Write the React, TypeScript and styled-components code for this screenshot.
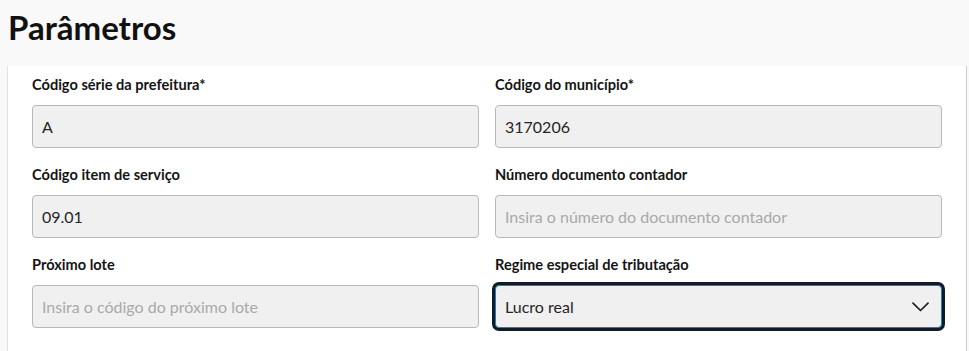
import React from "react";
import styled, { createGlobalStyle } from "styled-components";

const Global = createGlobalStyle`
  html, body { margin: 0; padding: 0; background: #f9f9f9; }
  body { font-family: Lato, "Noto Sans", sans-serif; color: #1a1a1a; }
  * { box-sizing: border-box; }
`;

const Page = styled.div`
  width: 969px;
  height: 351px;
  overflow: hidden;
  background: #f9f9f9;
  display: flex;
  flex-direction: column;
`;

const Header = styled.header`
  height: 66px;
  padding: 7px 0 0 8px;
  flex: none;
`;

const Title = styled.h1`
  margin: 0;
  font-size: 33px;
  line-height: 40px;
  font-weight: 700;
  color: #111;
`;

const Panel = styled.section`
  margin: 0 2px 0 7px;
  flex: 1;
  background: #fff;
  border-left: 1px solid #e2e2e2;
  border-right: 1px solid #cfcfcf;
  padding: 9px 24px 0 24px;
  display: grid;
  grid-template-columns: 447px 447px;
  column-gap: 16px;
  row-gap: 0;
  align-content: start;
`;

const Field = styled.div`
  display: flex;
  flex-direction: column;
  height: 90px;
`;

const Label = styled.label`
  font-size: 14.6px;
  font-weight: 700;
  color: #141414;
  line-height: 20px;
  height: 20px;
  margin-bottom: 10px;
`;

const Input = styled.div<{ $placeholder?: boolean }>`
  height: 43px;
  border: 1px solid #b8b8b8;
  border-radius: 4px;
  background: #f0f0f0;
  padding: 0 10px 0 9px;
  display: flex;
  align-items: center;
  font-size: 16px;
  color: ${(p) => (p.$placeholder ? "#a9a9a9" : "#262626")};
`;

const Select = styled(Input)`
  border: 1px solid #1f7fae;
  border-radius: 4px;
  box-shadow: 0 0 0 3px #0e1b29;
  justify-content: space-between;
  padding-right: 12px;
`;

const Chevron = () => (
  <svg width="17" height="10" viewBox="0 0 17 10" fill="none">
    <path d="M1 1.2 L8.5 8.5 L16 1.2" stroke="#1e1e1e" strokeWidth="1.7" strokeLinecap="round" strokeLinejoin="round" />
  </svg>
);

export default function App() {
  return (
    <Page>
      <Global />
      <Header>
        <Title>Parâmetros</Title>
      </Header>
      <Panel>
        <Field>
          <Label>Código série da prefeitura*</Label>
          <Input>A</Input>
        </Field>
        <Field>
          <Label>Código do município*</Label>
          <Input>3170206</Input>
        </Field>
        <Field>
          <Label>Código item de serviço</Label>
          <Input>09.01</Input>
        </Field>
        <Field>
          <Label>Número documento contador</Label>
          <Input $placeholder>Insira o número do documento contador</Input>
        </Field>
        <Field>
          <Label>Próximo lote</Label>
          <Input $placeholder>Insira o código do próximo lote</Input>
        </Field>
        <Field>
          <Label>Regime especial de tributação</Label>
          <Select>
            <span>Lucro real</span>
            <Chevron />
          </Select>
        </Field>
      </Panel>
    </Page>
  );
}
